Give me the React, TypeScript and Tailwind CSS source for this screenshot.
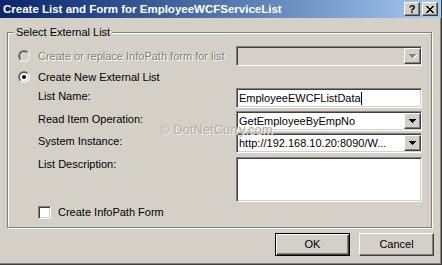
import React from "react";

const sunken =
  "border border-t-[#808080] border-l-[#808080] border-b-white border-r-white shadow-[inset_1px_1px_0_#404040,inset_-1px_-1px_0_#d4d0c8]";
const raised =
  "border border-t-white border-l-white border-b-[#404040] border-r-[#404040] shadow-[inset_-1px_-1px_0_#808080]";

function Arrow({ disabled }: { disabled?: boolean }) {
  return (
    <svg width="8" height="5" viewBox="0 0 8 5" shapeRendering="crispEdges">
      {disabled && <polygon points="1,1 8,1 4.5,5" fill="#ffffff" />}
      <polygon points="0,0 7,0 3.5,4" fill={disabled ? "#808080" : "#000000"} />
    </svg>
  );
}

function ComboBox({ value, disabled }: { value?: string; disabled?: boolean }) {
  return (
    <div
      className={`flex h-[20px] w-[186px] items-center ${sunken} ${
        disabled ? "bg-[#d4d0c8]" : "bg-white"
      }`}
    >
      <div className="flex-1 truncate pl-[2px] leading-[16px] text-black">{value}</div>
      <div className={`flex h-[16px] w-[17px] items-center justify-center bg-[#d4d0c8] ${raised}`}>
        <Arrow disabled={disabled} />
      </div>
    </div>
  );
}

function Radio({ checked, disabled }: { checked?: boolean; disabled?: boolean }) {
  return (
    <div className="h-[12px] w-[12px] shrink-0 rounded-full border border-t-[#808080] border-l-[#808080] border-b-white border-r-white">
      <div
        className={`flex h-full w-full items-center justify-center rounded-full border border-t-[#404040] border-l-[#404040] border-b-[#d4d0c8] border-r-[#d4d0c8] ${
          disabled ? "bg-[#d4d0c8]" : "bg-white"
        }`}
      >
        {checked && <div className="h-[4px] w-[4px] rounded-full bg-black" />}
      </div>
    </div>
  );
}

function CloseGlyph() {
  const rows = ["11000011", "01100110", "00111100", "00011000", "00111100", "01100110", "11000011"];
  return (
    <svg width="8" height="7" viewBox="0 0 8 7" shapeRendering="crispEdges">
      {rows.map((r, y) =>
        r.split("").map((c, x) => (c === "1" ? <rect key={`${x}-${y}`} x={x} y={y} width="1" height="1" fill="#000" /> : null))
      )}
    </svg>
  );
}

export default function App() {
  return (
    <div className="relative h-[265px] w-[442px] overflow-hidden border-r border-b border-[#404040] bg-[#d4d0c8] font-['Liberation_Sans',Arial,sans-serif] text-[11px] text-black shadow-[inset_-1px_-1px_0_#808080]">
      {/* title bar */}
      <div className="flex h-[18px] items-center bg-linear-to-r from-[#0a246a] to-[#a6caf0] pl-[3px] pr-[3px]">
        <div className="flex-1 truncate text-[11.5px] font-bold leading-[18px] text-white">
          Create List and Form for EmployeeWCFServiceList
        </div>
        <div className="flex gap-[2px]">
          <div className={`flex h-[14px] w-[16px] items-center justify-center bg-[#d4d0c8] ${raised}`}>
            <span className="text-[11px] font-bold leading-none">?</span>
          </div>
          <div className={`flex h-[14px] w-[16px] items-center justify-center bg-[#d4d0c8] ${raised}`}>
            <CloseGlyph />
          </div>
        </div>
      </div>

      {/* group box */}
      <div className="relative ml-[7px] mt-[14px] h-[196px] w-[425px] border border-[#808080] shadow-[1px_1px_0_#fff,inset_1px_1px_0_#fff]">
        <span className="absolute -top-[8px] left-[6px] bg-[#d4d0c8] px-[2px] leading-[14px]">Select External List</span>

        <div className="flex flex-col pl-[10px] pt-[13px]">
          <div className="flex h-[20px] items-center">
            <div className="flex w-[218px] items-center gap-[8px]">
              <Radio disabled />
              <span className="text-[#808080] [text-shadow:1px_1px_0_#fff]">Create or replace InfoPath form for list</span>
            </div>
            <ComboBox disabled />
          </div>

          <div className="mt-[4px] flex h-[14px] items-center gap-[8px]">
            <Radio checked />
            <span>Create New External List</span>
          </div>

          <div className="mt-[4px] flex h-[20px] items-start">
            <span className="mt-[1px] w-[218px] pl-[20px] leading-[14px]">List Name:</span>
            <div className={`flex h-[20px] w-[186px] items-center bg-white ${sunken}`}>
              <span className="pl-[2px] leading-[16px]">EmployeeEWCFListData</span>
              <span className="h-[13px] w-[1px] bg-black" />
            </div>
          </div>

          <div className="mt-[3px] flex h-[20px] items-start">
            <span className="mt-[1px] w-[218px] pl-[20px] leading-[14px]">Read Item Operation:</span>
            <ComboBox value="GetEmployeeByEmpNo" />
          </div>

          <div className="mt-[2px] flex h-[20px] items-start">
            <span className="mt-[1px] w-[218px] pl-[20px] leading-[14px]">System Instance:</span>
            <ComboBox value="http://192.168.10.20:8090/W..." />
          </div>

          <div className="mt-[4px] flex h-[45px] items-start">
            <span className="w-[218px] pl-[20px] leading-[14px]">List Description:</span>
            <div className={`h-[45px] w-[186px] bg-white ${sunken}`} />
          </div>

          <div className="mt-[4px] flex h-[13px] items-center pl-[20px]">
            <div className={`h-[13px] w-[13px] bg-white ${sunken}`} />
            <span className="ml-[7px]">Create InfoPath Form</span>
          </div>
        </div>
      </div>

      {/* buttons */}
      <div className="mr-[7px] mt-[5px] flex justify-end gap-[9px]">
        <button className="flex h-[23px] w-[75px] items-center justify-center border border-black bg-[#d4d0c8] shadow-[inset_1px_1px_0_#fff,inset_-1px_-1px_0_#404040,inset_-2px_-2px_0_#808080]">
          OK
        </button>
        <button className={`flex h-[23px] w-[75px] items-center justify-center bg-[#d4d0c8] ${raised}`}>Cancel</button>
      </div>

      {/* watermark */}
      <span className="pointer-events-none absolute left-[160px] top-[122px] text-[13px] leading-[15px] text-[#b3afa7] [text-shadow:1px_1px_0_#f2f0ec]">
        © DotNetCurry.com
      </span>
    </div>
  );
}
